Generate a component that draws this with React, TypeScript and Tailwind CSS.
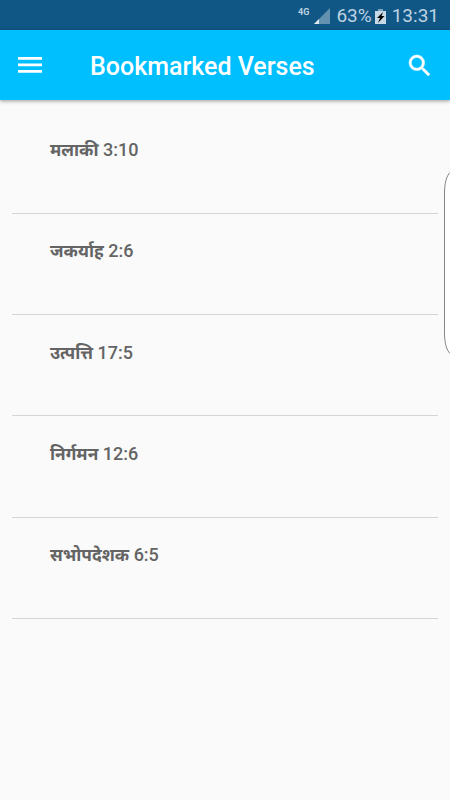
const verses = [
  { book: "मलाकी", reference: "3:10" },
  { book: "जकर्याह", reference: "2:6" },
  { book: "उत्पत्ति", reference: "17:5" },
  { book: "निर्गमन", reference: "12:6" },
  { book: "सभोपदेशक", reference: "6:5" },
]

export default function App() {
  return (
    <div className="relative h-[800px] w-[450px] overflow-hidden bg-[#fafafa] font-['Roboto','Noto_Sans',sans-serif]">
      <div className="flex h-[30px] items-center justify-end bg-[#115786] pr-[11px] pt-[2px] text-[19px] text-[#bdd2e2]">
        <span className="mr-[5px] mb-[7px] text-[9px] font-bold">4G</span>
        <svg className="mr-[6px]" width="16" height="16" viewBox="0 0 16 16">
          <path d="M16 0v16H0z" fill="#6392b1" />
          <path d="M5 11v5H0z" fill="#dce8f0" />
        </svg>
        <span>63%</span>
        <svg className="mr-[6px] ml-[3px]" width="11" height="15" viewBox="0 0 11 15">
          <path d="M3 0h5v2H3z" fill="#7fa4bd" />
          <path d="M0 2h11v13H0z" fill="#c6d9e6" />
          <path d="M8 3L2 9h3l-2 5 6.500-7H6.500z" fill="#000" />
        </svg>
        <span>13:31</span>
      </div>
      <header className="flex h-[70px] items-center bg-[#00bfff] px-[18px] text-white shadow-[0_1px_4px_rgba(0,0,0,0.4)]">
        <svg width="24" height="16" viewBox="0 0 24 16">
          <path d="M0 0h24v2.8H0zM0 6.500h24v2.800H0zM0 13h24v2.800H0z" fill="currentColor" />
        </svg>
        <h1 className="ml-12 flex-1 pt-[3px] text-[25px] font-medium">Bookmarked Verses</h1>
        <svg className="mr-[2px] overflow-visible" width="21" height="21" viewBox="3 3 17.5 17.5">
          <path fill="currentColor" stroke="currentColor" strokeWidth="0.4" d="M15.5 14h-.79l-.28-.27A6.47 6.47 0 0 0 16 9.5 6.5 6.5 0 1 0 9.5 16c1.61 0 3.09-.59 4.23-1.57l.27.28v.79l5 4.99L20.49 19l-4.99-5zm-6 0C7.01 14 5 11.99 5 9.5S7.01 5 9.5 5 14 7.01 14 9.5 11.99 14 9.5 14z" />
        </svg>
      </header>
      <ul className="mx-3 pt-[12.5px]">
        {verses.map(({ book, reference }) => (
          <li key={book} className="h-[101.25px] border-b border-[#d5d5d5] pt-[23.5px] pl-[38px] text-[18px] font-medium text-[#646464]">
            <span className="text-[17.3px] font-bold">{book}</span> {reference}
          </li>
        ))}
      </ul>
      {/* edge panel handle */}
      <svg className="absolute top-[171px] right-0" width="6" height="184" viewBox="0 0 6 184" fill="none">
        <path d="M6 1.5C2.5 5 .5 12 .5 23v138c0 11 2 18 5.500 21.500z" fill="#fff" />
        <path d="M6 1.500C2.500 5 .5 12 .5 23v138c0 11 2 18 5.500 21.500" stroke="#858585" />
      </svg>
    </div>
  )
}
